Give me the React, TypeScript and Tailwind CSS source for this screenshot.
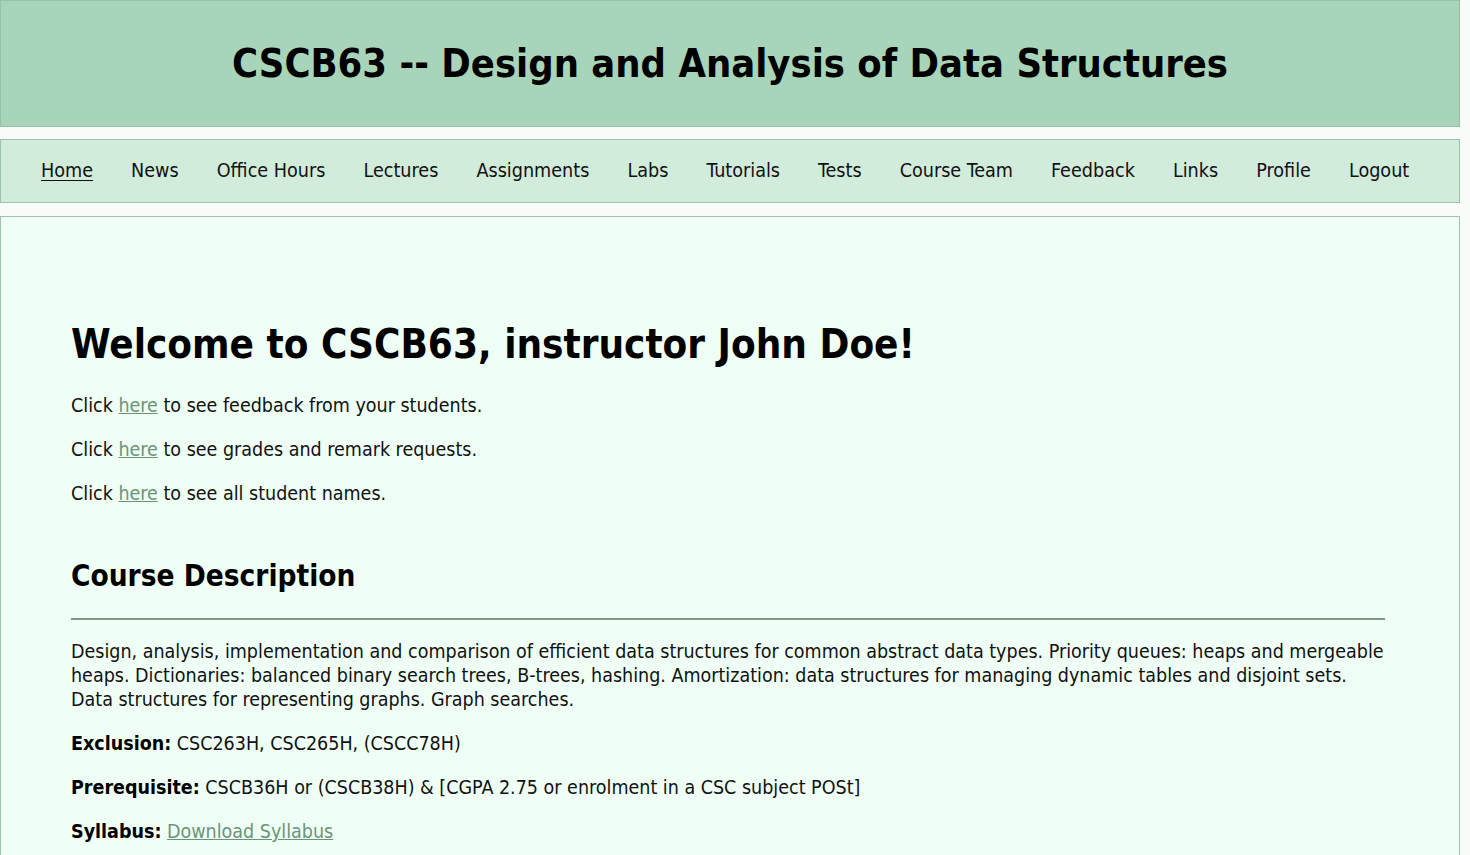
const navItems = [
  "Home",
  "News",
  "Office Hours",
  "Lectures",
  "Assignments",
  "Labs",
  "Tutorials",
  "Tests",
  "Course Team",
  "Feedback",
  "Links",
  "Profile",
  "Logout",
];

export default function App() {
  return (
    <div className="min-h-screen bg-[#f7fcf9] font-['DejaVu_Sans_Condensed','DejaVu_Sans',sans-serif] text-[#111]">
      <div className="w-[1460px]">
        <header className="h-[127px] bg-[#a8d5ba] border border-[#96c2a7] flex items-center justify-center">
          <h1 className="text-[39.5px] font-bold text-black">
            CSCB63 -- Design and Analysis of Data Structures
          </h1>
        </header>

        <nav className="mt-[12px] h-[64px] bg-[#d1ecdb] border border-[#9cc2ab] flex items-center gap-[38px] pl-[40px] text-[19.6px]">
          {navItems.map((item) => (
            <a
              key={item}
              href="#"
              className={item === "Home" ? "underline underline-offset-[3px]" : ""}
            >
              {item}
            </a>
          ))}
        </nav>

        <main className="mt-[13px] min-h-[700px] bg-[#f0fff5] border border-[#9cc2ab] px-[70px] pt-[102px] text-[19.5px]">
          <h1 className="text-[40px] font-bold text-black leading-[50px]">
            Welcome to CSCB63, instructor John Doe!
          </h1>
          <div className="mt-[25px] flex flex-col gap-[20px] leading-[24px]">
            <p>
              Click <a href="#" className="text-[#6a9479] underline">here</a> to see feedback from your students.
            </p>
            <p>
              Click <a href="#" className="text-[#6a9479] underline">here</a> to see grades and remark requests.
            </p>
            <p>
              Click <a href="#" className="text-[#6a9479] underline">here</a> to see all student names.
            </p>
          </div>

          <h2 className="mt-[50px] text-[29.5px] font-bold text-black leading-[40px]">Course Description</h2>
          <hr className="mt-[22px] mr-[4px] border-t-2 border-[#7d9a88]" />

          <p className="mt-[20px] leading-[24px] w-[1313px]">
            Design, analysis, implementation and comparison of efficient data structures for common abstract data types. Priority queues: heaps and mergeable heaps. Dictionaries: balanced binary search trees, B-trees, hashing. Amortization: data structures for managing dynamic tables and disjoint sets. Data structures for representing graphs. Graph searches.
          </p>
          <div className="mt-[20px] flex flex-col gap-[20px] leading-[24px]">
            <p>
              <span className="font-bold text-black">Exclusion:</span> CSC263H, CSC265H, (CSCC78H)
            </p>
            <p>
              <span className="font-bold text-black">Prerequisite:</span> CSCB36H or (CSCB38H) &amp; [CGPA 2.75 or enrolment in a CSC subject POSt]
            </p>
            <p>
              <span className="font-bold text-black">Syllabus:</span>{" "}
              <a href="#" className="text-[#6a9479] underline">Download Syllabus</a>
            </p>
          </div>
        </main>
      </div>
    </div>
  );
}
